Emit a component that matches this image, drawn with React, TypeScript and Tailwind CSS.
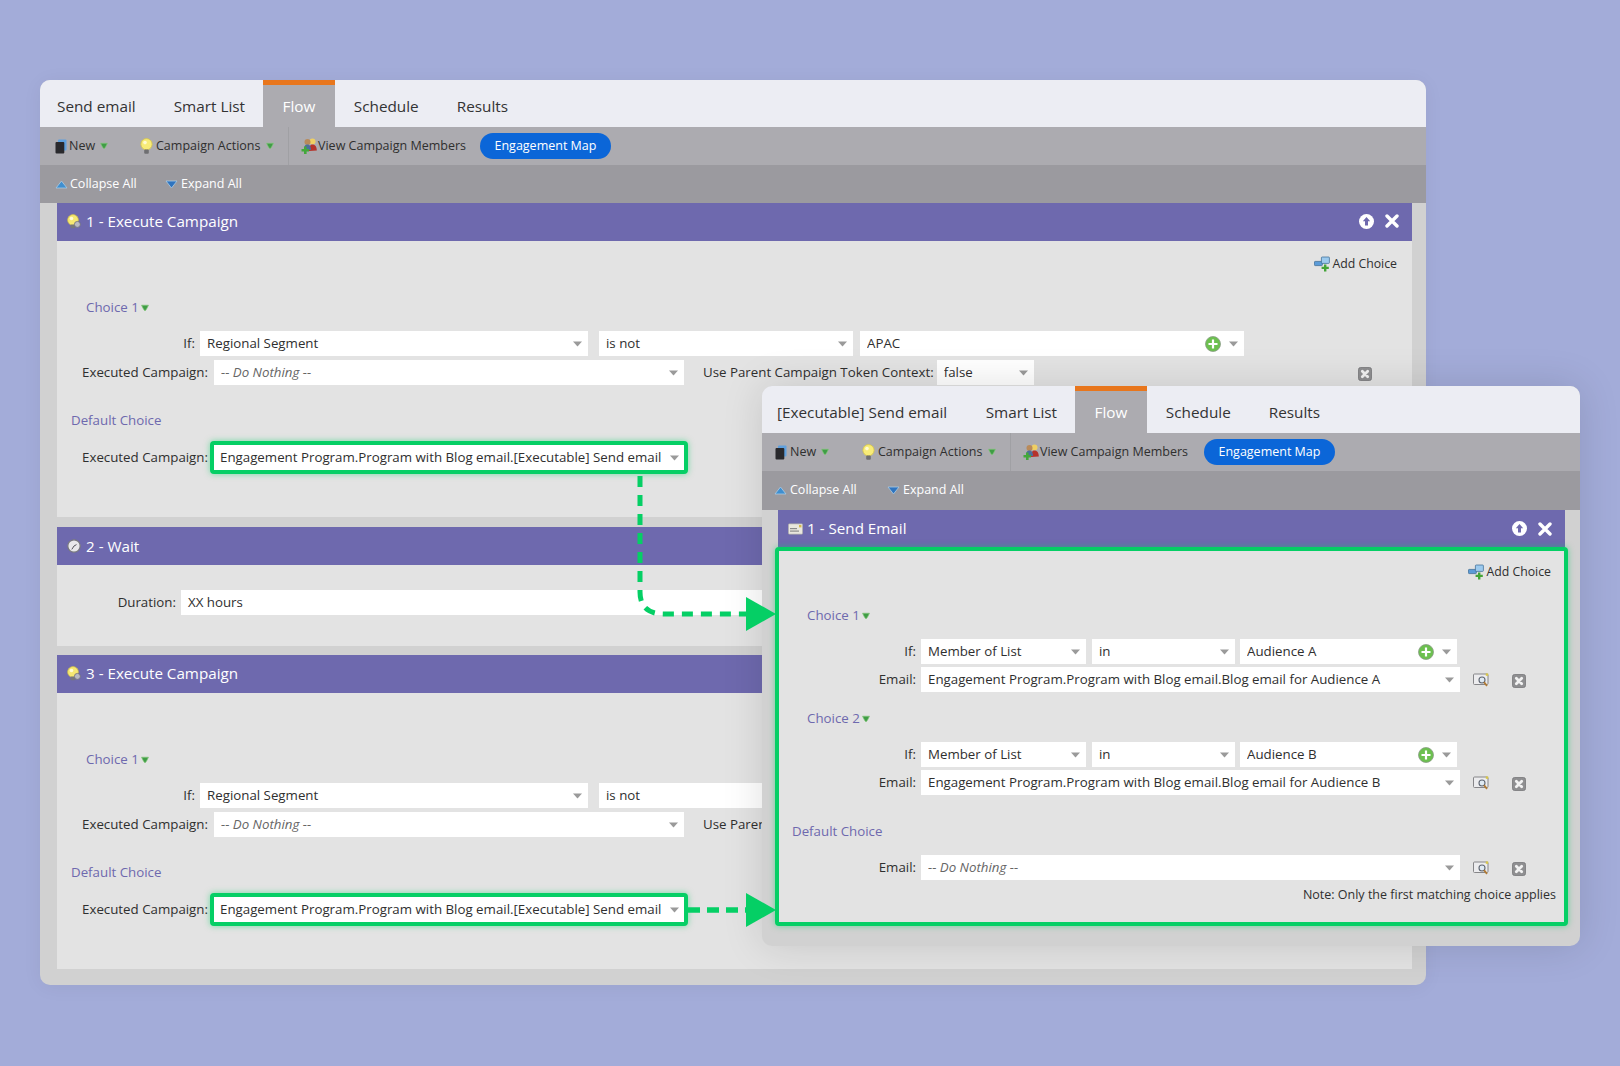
const GREEN = "#05cf65";

function Caret() {
  return (
    <svg width="9" height="6" viewBox="0 0 9 6" className="shrink-0">
      <path d="M0 0.5h9L4.5 5.5z" fill="#9a9a9a" />
    </svg>
  );
}

function GreenCaret() {
  return (
    <svg width="8" height="8" viewBox="0 0 8 8" className="shrink-0">
      <path d="M0.5 1.2h7L5.6 5 4 7 2.400 5z" fill="#3f9d45" stroke="#86c97c" strokeWidth="0.700" />
    </svg>
  );
}

function BookIcon() {
  return (
    <svg width="12" height="15" viewBox="0 0 12 15" className="shrink-0">
      <rect x="3" y="0.500" width="8.500" height="11" rx="1" fill="#5fa0de" />
      <rect x="0.500" y="3" width="8.800" height="11.500" rx="1" fill="#29292d" />
    </svg>
  );
}

function BulbIcon() {
  return (
    <svg width="13" height="17" viewBox="0 0 13 17" className="shrink-0">
      <circle cx="6.500" cy="6.200" r="5.600" fill="#f8ec78" stroke="#d8c648" strokeWidth="0.800" />
      <circle cx="5" cy="4.600" r="1.800" fill="#fffbd0" />
      <rect x="4.200" y="11.600" width="4.600" height="4.200" rx="1" fill="#6f6f72" />
    </svg>
  );
}

function GearBulbIcon() {
  return (
    <svg width="14" height="15" viewBox="0 0 14 15" className="shrink-0">
      <circle cx="6" cy="6" r="5.400" fill="#f6e873" stroke="#cdbb48" strokeWidth="0.700" />
      <circle cx="4.500" cy="4.500" r="1.800" fill="#fffbd6" />
      <rect x="3.500" y="10.600" width="4.600" height="3.600" rx="1" fill="#77777c" />
      <circle cx="10.400" cy="10.400" r="3" fill="#b9b9c4" stroke="#6d6d78" strokeWidth="0.800" />
    </svg>
  );
}

function ClockIcon() {
  return (
    <svg width="14" height="14" viewBox="0 0 14 14" className="shrink-0">
      <circle cx="7" cy="7" r="6.200" fill="#e8e8ea" stroke="#77777c" strokeWidth="1.200" />
      <path d="M7 7L4.800 10.400M7 7l2.500-1.400" stroke="#55555a" strokeWidth="1" fill="none" />
    </svg>
  );
}

function MailIcon() {
  return (
    <svg width="15" height="12" viewBox="0 0 15 12" className="shrink-0">
      <rect x="0.300" y="0.800" width="14.400" height="10.400" rx="1" fill="#e9e7de" stroke="#9a9a9a" strokeWidth="0.600" />
      <rect x="2" y="5" width="7" height="1.200" fill="#8b8b8b" />
      <rect x="2" y="7.500" width="9" height="1.200" fill="#8b8b8b" />
      <rect x="11" y="2" width="2.400" height="2.400" fill="#d6b94c" />
    </svg>
  );
}

function MembersIcon() {
  return (
    <svg width="16" height="16" viewBox="0 0 16 16" className="shrink-0">
      <circle cx="11.500" cy="3.500" r="3" fill="#efcf63" />
      <path d="M8 13c0-5 1.500-6.500 3.500-6.500S15.800 8 15.800 12.500z" fill="#b5332b" />
      <circle cx="6.500" cy="4" r="3" fill="#b98a5a" />
      <path d="M3 12c0-4.500 1.500-5.500 3.500-5.500S10 8 10 12z" fill="#4d6f9c" />
      <path d="M3 8.500h2.600V11H8v2.500H5.600V16H3v-2.500H0.500V11H3z" fill="#43a83b" />
    </svg>
  );
}

function AddChoiceIcon() {
  return (
    <svg width="16" height="16" viewBox="0 0 16 16" className="shrink-0">
      <rect x="0.400" y="5.400" width="8" height="4.200" rx="0.800" fill="#5b9bd8" stroke="#35658f" strokeWidth="0.700" />
      <rect x="7.400" y="1" width="8" height="6.400" rx="0.800" fill="#9ccaee" stroke="#35658f" strokeWidth="0.700" />
      <path d="M10 8.500h2.400v2.200h2.400v2.400h-2.400v2.400H10v-2.400H7.600v-2.400H10z" fill="#43a437" />
    </svg>
  );
}

function DeleteIcon() {
  return (
    <svg width="14" height="14" viewBox="0 0 14 14" className="shrink-0">
      <rect x="0.500" y="0.500" width="13" height="13" rx="2" fill="#8f8f91" stroke="#77777a" strokeWidth="0.800" />
      <path d="M4.300 4.300l5.400 5.400M9.700 4.300l-5.400 5.400" stroke="#f2f2f2" strokeWidth="2.800" strokeLinecap="round" />
    </svg>
  );
}

function PreviewIcon() {
  return (
    <svg width="16" height="15" viewBox="0 0 16 15" className="shrink-0">
      <rect x="0.500" y="1" width="14.500" height="10.500" rx="1" fill="#ececee" stroke="#868689" strokeWidth="1" />
      <circle cx="9" cy="7" r="3" fill="#dfeaf3" stroke="#5f6672" strokeWidth="1.100" />
      <path d="M11 9.200l3 3.600" stroke="#b07a35" strokeWidth="1.800" />
      <rect x="12.800" y="0.400" width="2.400" height="2.400" fill="#d8c648" />
    </svg>
  );
}

function PlusCircle() {
  return (
    <svg width="16" height="16" viewBox="0 0 16 16" className="shrink-0">
      <circle cx="8" cy="8" r="7.500" fill="#6cc04f" stroke="#8c9c88" strokeWidth="0.800" />
      <path d="M8 3.500v9M3.500 8h9" stroke="#fff" strokeWidth="2.200" />
    </svg>
  );
}

function UpCircle() {
  return (
    <svg width="15" height="15" viewBox="0 0 15 15" className="shrink-0">
      <circle cx="7.500" cy="7.500" r="7.500" fill="#fff" />
      <path d="M7.500 3L3.800 7.200H6v4.300h3V7.200h2.200z" fill="#6e69ae" />
    </svg>
  );
}

function CloseX() {
  return (
    <svg width="14" height="14" viewBox="0 0 14 14" className="shrink-0">
      <path d="M2 2l10 10M12 2L2 12" stroke="#fff" strokeWidth="3.400" strokeLinecap="round" />
    </svg>
  );
}

function Sel({
  className,
  text,
  italic,
  plus,
}: {
  className: string;
  text: string;
  italic?: boolean;
  plus?: boolean;
}) {
  return (
    <div className={"flex h-[25px] shrink-0 items-center bg-white pl-[7px] pr-[6px] pt-px " + className}>
      <span className={italic ? "flex-1 truncate italic text-[#666]" : "flex-1 truncate"}>{text}</span>
      {plus && (
        <span className="mr-[8px]">
          <PlusCircle />
        </span>
      )}
      <Caret />
    </div>
  );
}

function Label({ className, children }: { className: string; children: React.ReactNode }) {
  return <div className={"shrink-0 text-right " + className}>{children}</div>;
}

function AddChoice({ className }: { className: string }) {
  return (
    <div className={"flex h-[20px] items-center justify-end gap-[2px] text-[12.3px] " + className}>
      <AddChoiceIcon />
      <span>Add Choice</span>
    </div>
  );
}

function Title({ className, children }: { className: string; children: React.ReactNode }) {
  return (
    <div className={"flex h-[20px] items-center gap-[2px] pt-[2px] text-[#6e69ae] " + className}>{children}</div>
  );
}

function PanelHeader({
  icon,
  title,
  tools,
  className,
}: {
  icon: React.ReactNode;
  title: string;
  tools?: boolean;
  className: string;
}) {
  return (
    <div className={"flex items-center bg-[#6e69ae] pl-[10px] pr-[13px] text-[15.2px] text-white " + className}>
      <span className="flex w-[19px] shrink-0">{icon}</span>
      <span className="flex-1">{title}</span>
      {tools && (
        <span className="flex items-center gap-[11px]">
          <UpCircle />
          <CloseX />
        </span>
      )}
    </div>
  );
}

function ExecuteCampaign({ step }: { step: string }) {
  return (
    <div>
      <PanelHeader className="h-[38px] pb-[2px]" icon={<GearBulbIcon />} title={step + " - Execute Campaign"} tools />
      <div className="h-[276px] bg-[#e3e3e3] pt-[13px]">
        <AddChoice className="pr-[15px]" />
        <Title className="ml-[29px] mt-[23px]">
          Choice 1 <GreenCaret />
        </Title>
        <div className="mt-[14px] flex items-center">
          <Label className="w-[138px]">If:</Label>
          <Sel className="ml-[5px] w-[388px]" text="Regional Segment" />
          <Sel className="ml-[11px] w-[254px]" text="is not" />
          <Sel className="ml-[7px] w-[384px]" text="APAC" plus />
        </div>
        <div className="mt-[4px] flex items-center">
          <Label className="w-[151px]">Executed Campaign:</Label>
          <Sel className="ml-[6px] w-[470px]" text="-- Do Nothing --" italic />
          <span className="ml-[19px] shrink-0">Use Parent Campaign Token Context:</span>
          <Sel className="ml-[3px] w-[97px]" text="false" />
          <span className="ml-[324px] mt-[3px]">
            <DeleteIcon />
          </span>
        </div>
        <Title className="ml-[14px] mt-[25px]">Default Choice</Title>
        <div className="mt-[11px] flex items-center">
          <Label className="w-[151px]">Executed Campaign:</Label>
          <div className="ml-[2px] flex h-[33px] w-[478px] shrink-0 items-center rounded-[4px] border-4 border-[#05cf65] bg-white pl-[6px] pr-[5px] shadow-[0_0_6px_rgba(5,207,101,0.5)]">
            <span className="flex-1 truncate">Engagement Program.Program with Blog email.[Executable] Send email</span>
            <Caret />
          </div>
        </div>
      </div>
    </div>
  );
}

function Wait() {
  return (
    <div>
      <PanelHeader className="h-[38px]" icon={<ClockIcon />} title="2 - Wait" />
      <div className="h-[81px] bg-[#e3e3e3] pt-[25px]">
        <div className="flex items-center">
          <Label className="w-[119px]">Duration:</Label>
          <div className="ml-[5px] flex h-[25px] w-[1000px] items-center bg-white pl-[7px] pt-px">XX hours</div>
        </div>
      </div>
    </div>
  );
}

function Toolbars({ front, first }: { front?: boolean; first: string }) {
  const tabs = [first, "Smart List", "Flow", "Schedule", "Results"];
  return (
    <div className="overflow-hidden">
      <div className="flex h-[47px] bg-[#ecedf3] text-[15.3px] text-[#333]">
        {tabs.map((t, i) => (
          <div
            key={t}
            className={
              t === "Flow"
                ? "-ml-px flex items-center border-t-[5px] border-[#e8761c] bg-[#acabb0] px-[19.5px] text-white"
                : i === 0
                  ? front
                    ? "flex items-center pl-[15px] pr-[19.5px] pt-[5px]"
                    : "flex items-center pl-[17px] pr-[19px] pt-[5px]"
                  : "flex items-center px-[19px] pt-[5px]"
            }
          >
            {t}
          </div>
        ))}
      </div>
      <div className="flex h-[38px] items-center bg-[#acabb0] text-[12.5px]">
        <div className={front ? "flex w-[100px] shrink-0 items-center pl-[13px]" : "flex w-[100px] shrink-0 items-center pl-[15px]"}>
          <BookIcon />
          <span className={front ? "ml-[3px]" : "ml-[2px]"}>New</span>
          <span className="ml-[5px]">
            <GreenCaret />
          </span>
        </div>
        <div className="flex w-[148px] shrink-0 items-center">
          <BulbIcon />
          <span className="ml-[3px]">Campaign Actions</span>
          <span className="ml-[5px]">
            <GreenCaret />
          </span>
        </div>
        <div className="h-full w-px bg-[#a0a0a4]" />
        <div className="ml-[12px] flex shrink-0 items-center">
          <MembersIcon />
          <span className="ml-[1px]">View Campaign Members</span>
        </div>
        <div
          className={
            front
              ? "ml-[16px] flex h-[26px] w-[131px] shrink-0 items-center justify-center rounded-full bg-[#0b66d8] text-white"
              : "ml-[14px] flex h-[26px] w-[131px] shrink-0 items-center justify-center rounded-full bg-[#0b66d8] text-white"
          }
        >
          Engagement Map
        </div>
      </div>
      <div
        className={
          front
            ? "flex h-[39px] items-center bg-[#9b9a9f] pl-[12px] text-[12.5px] text-white"
            : "flex h-[38px] items-center bg-[#9b9a9f] pl-[15px] text-[12.5px] text-white"
        }
      >
        <svg width="13" height="9" viewBox="0 0 13 9" className="shrink-0">
          <path d="M6.500 1l5.500 7H1z" fill="#3f8fd0" stroke="#a9cbe6" strokeWidth="0.800" />
        </svg>
        <span className={front ? "ml-[3px] w-[97px]" : "ml-[2px] w-[95px]"}>Collapse All</span>
        <svg width="13" height="9" viewBox="0 0 13 9" className="shrink-0">
          <path d="M1 1h11L6.500 8z" fill="#2f74bf" stroke="#a9cbe6" strokeWidth="0.800" />
        </svg>
        <span className="ml-[3px]">Expand All</span>
      </div>
    </div>
  );
}

function EmailChoice({ n, audience, top }: { n: string; audience: string; top: string }) {
  return (
    <div>
      <Title className={"ml-[28px] " + top}>
        Choice {n} <GreenCaret />
      </Title>
      <div className="mt-[14px] flex items-center">
        <Label className="w-[137px]">If:</Label>
        <Sel className="ml-[5px] w-[165px]" text="Member of List" />
        <Sel className="ml-[6px] w-[143px]" text="in" />
        <Sel className="ml-[5px] w-[217px]" text={"Audience " + audience} plus />
      </div>
      <EmailRow top="mt-[3px]" text={"Engagement Program.Program with Blog email.Blog email for Audience " + audience} />
    </div>
  );
}

function EmailRow({ top, text, italic }: { top: string; text: string; italic?: boolean }) {
  return (
    <div className={"flex items-center " + top}>
      <Label className="w-[137px]">Email:</Label>
      <Sel className="ml-[5px] w-[539px]" text={text} italic={italic} />
      <span className="ml-[13px] mt-[2px]">
        <PreviewIcon />
      </span>
      <span className="ml-[23px] mt-[2px]">
        <DeleteIcon />
      </span>
    </div>
  );
}

export default function App() {
  return (
    <div className="relative h-[1066px] w-full overflow-hidden bg-[#a3acd9] pl-[40px] pt-[80px] font-['Open_Sans',sans-serif] text-[13.3px] text-[#2f2f2f]">
      <div className="w-[1386px] overflow-hidden rounded-[10px] bg-[#d1d1d1] shadow-[0_2px_20px_rgba(0,0,0,0.05)]">
        <Toolbars first="Send email" />
        <div className="flex flex-col pb-[16px] pl-[17px] pr-[14px]">
          <ExecuteCampaign step="1" />
          <div className="mt-[10px]">
            <Wait />
          </div>
          <div className="mt-[9px]">
            <ExecuteCampaign step="3" />
          </div>
        </div>
      </div>

      <div className="absolute left-[762px] top-[386px] w-[818px] rounded-[10px] bg-[#d1d1d1] shadow-[0_0_40px_rgba(0,0,0,0.13)]">
        <div className="overflow-hidden rounded-t-[10px]">
          <Toolbars front first="[Executable] Send email" />
        </div>
        <div className="pb-[20px] pl-[16px] pr-[15px]">
          <PanelHeader className="h-[37px]" icon={<MailIcon />} title="1 - Send Email" tools />
          <div className="relative -mx-[3px] h-[379px] rounded-[4px] border-4 border-[#05cf65] bg-[#e3e3e3] pt-[11px] shadow-[0_0_6px_rgba(5,207,101,0.5)]">
            <AddChoice className="pr-[13px]" />
            <EmailChoice n="1" audience="A" top="mt-[23px]" />
            <EmailChoice n="2" audience="B" top="mt-[16px]" />
            <Title className="ml-[13px] mt-[26px]">Default Choice</Title>
            <EmailRow top="mt-[14px]" text="-- Do Nothing --" italic />
            <div className="mt-[5px] flex h-[20px] items-center justify-end pr-[8px] text-[12.5px]">
              Note: Only the first matching choice applies
            </div>
          </div>
        </div>
      </div>

      <svg className="pointer-events-none absolute left-0 top-0" width="1620" height="1066" viewBox="0 0 1620 1066" fill="none">
        <path
          d="M640 474V592Q640 614 664 614H746"
          stroke={GREEN}
          strokeWidth="5"
          strokeDasharray="11 8"
          strokeDashoffset="-2"
        />
        <path d="M746 597L776 614L746 631z" fill={GREEN} />
        <path d="M688 910H746" stroke={GREEN} strokeWidth="5.500" strokeDasharray="12 7" />
        <path d="M746 893L776 910L746 927z" fill={GREEN} />
      </svg>
    </div>
  );
}
